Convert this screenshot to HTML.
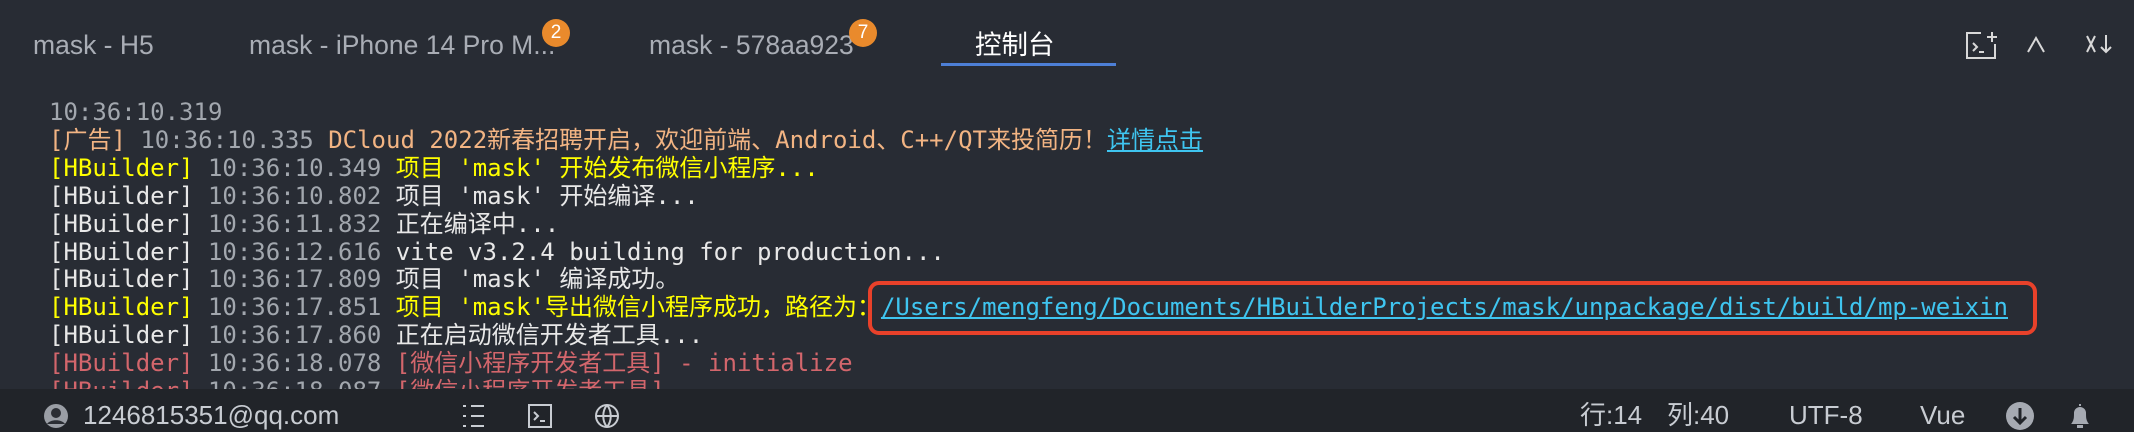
<!DOCTYPE html>
<html><head><meta charset="utf-8"><style>
html,body{margin:0;padding:0}
body{width:2134px;height:432px;background:#282c34;position:relative;overflow:hidden;font-family:"Liberation Sans","Noto Sans CJK SC",sans-serif}
.tab{position:absolute;top:29px;font-size:26.5px;color:#a9adb5;white-space:nowrap;line-height:32px}
.badge{position:absolute;width:28px;height:28px;border-radius:50%;background:#e98a2c;color:#fff;font-size:19px;text-align:center;line-height:28px;top:19px}
.log{position:absolute;left:49px;top:99px;font-family:"DejaVu Sans Mono","Noto Sans CJK SC",monospace;font-size:24px;line-height:27.9px;white-space:pre;color:#e8e8e8}
.g{color:#a2a7ae}.y{color:#ffff00}.o{color:#f2b483}.r{color:#d3666c}.l{color:#3fc5f0;text-decoration:underline}
.sb{position:absolute;left:0;top:389px;width:2134px;height:43px;background:#212429}
.st{position:absolute;top:401px;font-size:26px;color:#c8ccd2;line-height:28px;white-space:nowrap}
</style></head><body>
<div class="tab" style="left:33px">mask - H5</div>
<div class="tab" style="left:249px">mask - iPhone 14 Pro M...</div>
<div class="badge" style="left:542px">2</div>
<div class="tab" style="left:649px">mask - 578aa923</div>
<div class="badge" style="left:849px">7</div>
<div class="tab" style="left:975px;color:#fff">控制台</div>
<div style="position:absolute;left:941px;top:63px;width:175px;height:3px;background:#4d7fd6"></div>
<svg style="position:absolute;left:1962px;top:30px" width="160" height="32" viewBox="0 0 160 32" fill="none" stroke="#d8d8d8" stroke-width="2">
<path d="M19 3H5v25h28v-14"/><path d="M30 2v10M25 7h10"/><path d="M11 13l4 4-4 4M17 22h5"/>
<path d="M66 22l8-14 8 14"/>
<path d="M125 6l8 16M133 6l-8 16M144 5v17M139 17l5 5 5-5"/>
</svg>
<div class="log"><span class="g">10:36:10.319</span>
<span class="o">[广告] </span><span class="g">10:36:10.335 </span><span class="o">DCloud 2022新春招聘开启，欢迎前端、Android、C++/QT来投简历！</span><span class="l">详情点击</span>
<span class="y">[HBuilder] </span><span class="g">10:36:10.349 </span><span class="y">项目 'mask' 开始发布微信小程序...</span>
[HBuilder] <span class="g">10:36:10.802 </span>项目 'mask' 开始编译...
[HBuilder] <span class="g">10:36:11.832 </span>正在编译中...
[HBuilder] <span class="g">10:36:12.616 </span>vite v3.2.4 building for production...
[HBuilder] <span class="g">10:36:17.809 </span>项目 'mask' 编译成功。
<span class="y">[HBuilder] </span><span class="g">10:36:17.851 </span><span class="y">项目 'mask'导出微信小程序成功，路径为：</span><span class="l">/Users/mengfeng/Documents/HBuilderProjects/mask/unpackage/dist/build/mp-weixin</span>
[HBuilder] <span class="g">10:36:17.860 </span>正在启动微信开发者工具...
<span class="r">[HBuilder] </span><span class="g">10:36:18.078 </span><span class="r">[微信小程序开发者工具] - initialize</span>
<span class="r">[HBuilder] </span><span class="g">10:36:18.087 </span><span class="r">[微信小程序开发者工具]</span></div>
<div style="position:absolute;left:868px;top:281px;width:1161px;height:46px;border:4px solid #e8412a;border-radius:11px"></div>
<div class="sb"></div>
<svg style="position:absolute;left:40px;top:402px" width="32" height="28" viewBox="0 0 32 28"><circle cx="16" cy="14" r="12" fill="#9a9ea5"/><circle cx="16" cy="11" r="5" fill="#2b2e34"/><path d="M7 22c3-5 15-5 18 0" fill="#2b2e34"/></svg>
<div class="st" style="left:83px">1246815351@qq.com</div>
<svg style="position:absolute;left:460px;top:402px" width="180" height="28" viewBox="0 0 180 28" fill="none" stroke="#c8ccd2" stroke-width="2">
<path d="M3 4h3M3 14h3M3 24h3M11 4h13M11 14h13M11 24h13"/>
<rect x="69" y="3" width="22" height="22"/><path d="M74 10l4 4-4 4M80 19h5"/>
<circle cx="147" cy="14" r="11"/><path d="M136 14h22M147 3c-5 6-5 16 0 22M147 3c5 6 5 16 0 22"/>
</svg>
<div class="st" style="left:1580px">行:14</div>
<div class="st" style="left:1667px">列:40</div>
<div class="st" style="left:1789px">UTF-8</div>
<div class="st" style="left:1920px">Vue</div>
<svg style="position:absolute;left:2004px;top:401px" width="100" height="30" viewBox="0 0 100 30"><circle cx="16" cy="15" r="14" fill="#a6aab2"/><path d="M16 7v15M10 16l6 6 6-6" stroke="#212429" stroke-width="3" fill="none"/><path d="M76 3v2M69 22c2-3 2-6 2-10a5 5 0 0110 0c0 4 0 7 2 10z" fill="#a6aab2" stroke="#a6aab2" stroke-width="2"/><rect x="73" y="24" width="6" height="3" fill="#a6aab2"/></svg>
</body></html>
